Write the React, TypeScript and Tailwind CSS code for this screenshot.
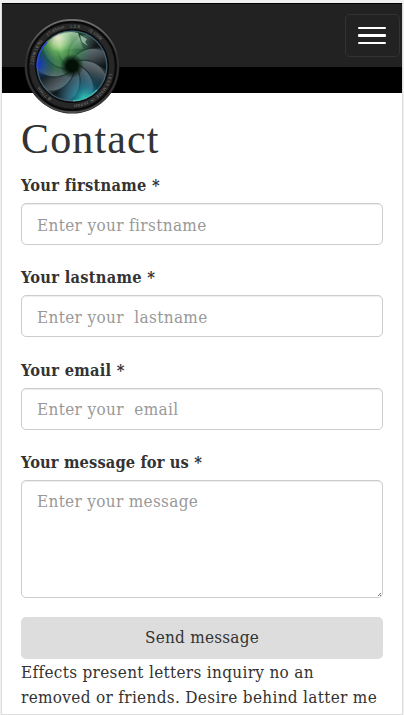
import React from "react";

type FieldProps = {
  label: string;
  placeholder: string;
};

const bladeAngles = [0, 40, 80, 120, 160, 200, 240, 280, 320];

function LensLogo() {
  return (
    <svg viewBox="0 0 96 96" className="h-24 w-24">
      <defs>
        <linearGradient id="rim" x1="0" y1="0" x2="0" y2="1">
          <stop offset="0" stopColor="#777" />
          <stop offset="0.4" stopColor="#303030" />
          <stop offset="0.8" stopColor="#333" />
          <stop offset="1" stopColor="#505050" />
        </linearGradient>
        <linearGradient id="blade" x1="68" y1="29" x2="76" y2="49" gradientUnits="userSpaceOnUse">
          <stop offset="0" stopColor="#66737a" />
          <stop offset="0.55" stopColor="#3d474c" />
          <stop offset="1" stopColor="#12181a" />
        </linearGradient>
        <radialGradient id="green" cx="35" cy="27" r="34" gradientUnits="userSpaceOnUse">
          <stop offset="0" stopColor="#9bea80" stopOpacity="0.9" />
          <stop offset="0.5" stopColor="#2f9638" stopOpacity="0.55" />
          <stop offset="1" stopColor="#083" stopOpacity="0" />
        </radialGradient>
        <radialGradient id="blue" cx="12" cy="46" r="20" gradientUnits="userSpaceOnUse">
          <stop offset="0" stopColor="#1229ef" />
          <stop offset="0.5" stopColor="#1746a5" stopOpacity="0.5" />
          <stop offset="1" stopColor="#035" stopOpacity="0" />
        </radialGradient>
        <radialGradient id="cyan" cx="61" cy="82" r="32" gradientUnits="userSpaceOnUse">
          <stop offset="0" stopColor="#35e0c0" />
          <stop offset="0.4" stopColor="#1688a8" stopOpacity="0.6" />
          <stop offset="1" stopColor="#046" stopOpacity="0" />
        </radialGradient>
        <radialGradient id="pink" cx="34" cy="20" r="14" gradientUnits="userSpaceOnUse">
          <stop offset="0" stopColor="#ffe6d5" />
          <stop offset="1" stopColor="#d7e8a0" stopOpacity="0" />
        </radialGradient>
        <linearGradient id="shine" x1="50" y1="14" x2="46" y2="36" gradientUnits="userSpaceOnUse">
          <stop offset="0" stopColor="#e8ffe8" stopOpacity="0.65" />
          <stop offset="1" stopColor="#8fc89a" stopOpacity="0" />
        </linearGradient>
        <radialGradient id="hub" cx="48" cy="48" r="12" gradientUnits="userSpaceOnUse">
          <stop offset="0.45" stopColor="#021005" />
          <stop offset="1" stopColor="#021005" stopOpacity="0" />
        </radialGradient>
        <clipPath id="glass">
          <circle cx="48" cy="48" r="35" />
        </clipPath>
        <path id="topText" d="M 9.5 48 A 38.5 38.5 0 0 1 86.5 48" />
        <path id="bottomText" d="M 86.5 48 A 38.5 38.5 0 0 1 9.5 48" />
      </defs>
      <circle cx="48" cy="48" r="47.5" fill="#202020" />
      <circle cx="48" cy="48" r="46.2" fill="#252525" stroke="url(#rim)" strokeWidth="1.7" />
      <circle cx="48" cy="48" r="44" fill="#161616" stroke="#080808" strokeWidth="1.5" />
      <circle cx="48" cy="48" r="39.5" fill="none" stroke="#272727" strokeWidth="6" />
      <g fill="#858585" fontFamily="Liberation Sans, sans-serif" fontSize="4">
        <text letterSpacing="0.3">
          <textPath href="#topText" startOffset="1">ZOOM LENS</textPath>
        </text>
        <text letterSpacing="0.3">
          <textPath href="#topText" startOffset="34">17-85mm</textPath>
        </text>
        <text letterSpacing="0.3">
          <textPath href="#topText" startOffset="58">1:2.8</textPath>
        </text>
        <text letterSpacing="0.3">
          <textPath href="#topText" startOffset="77">IS USM</textPath>
        </text>
        <text letterSpacing="0.5">
          <textPath href="#bottomText" startOffset="8">LENS MADE IN JAPAN</textPath>
        </text>
        <text letterSpacing="0.3">
          <textPath href="#bottomText" startOffset="82">Ø 77mm</textPath>
        </text>
      </g>
      <circle cx="48" cy="48" r="36.5" fill="#111b21" stroke="#050505" strokeWidth="1" />
      <g clipPath="url(#glass)">
        <circle cx="48" cy="48" r="35" fill="#2c363b" />
        {bladeAngles.map((angle) => (
          <path
            key={angle}
            d="M48 42 C56 31 69 27 82 34 L88 60 C77 45 64 39 52 43.5 Z"
            fill="url(#blade)"
            stroke="#1a2224"
            strokeWidth="0.5"
            transform={`rotate(${angle} 48 48)`}
          />
        ))}
        <circle cx="48" cy="48" r="35" fill="url(#green)" />
        <circle cx="48" cy="48" r="35" fill="url(#blue)" />
        <circle cx="48" cy="48" r="35" fill="url(#cyan)" />
        <circle cx="48" cy="48" r="35" fill="url(#pink)" />
        <path d="M28 24 Q38 11 54 15 L59 31 Q42 28 26 40 Z" fill="url(#shine)" />
        <path d="M56 17 L63 21 L61 24 L64 28 L58 24 Z" fill="#cce5d3" fillOpacity="0.6" />
        <circle cx="48" cy="48" r="12" fill="url(#hub)" />
      </g>
      <circle cx="48" cy="48" r="34.8" fill="none" stroke="#56788a" strokeOpacity="0.7" strokeWidth="1.2" />
      <path d="M13.2 50 A34.8 34.8 0 0 1 23 24" fill="none" stroke="#2448d8" strokeWidth="1.5" />
      <path d="M49 82.8 A34.8 34.8 0 0 0 73 72" fill="none" stroke="#41b4ae" strokeWidth="1.6" />
    </svg>
  );
}

function Field({ label, placeholder }: FieldProps) {
  return (
    <label className="block h-[92.4px]">
      <span className="block h-[29px] text-[16.3px] leading-[24px] font-bold tracking-[0.27px]">{label}</span>
      <input
        type="text"
        placeholder={placeholder}
        className="block h-[42px] w-full rounded-[5px] border border-[#ccc] bg-white px-[15px] pt-px text-[17px] tracking-[0.35px] shadow-[inset_0_1px_1px_rgba(0,0,0,0.075)] outline-none placeholder:text-[#999]"
      />
    </label>
  );
}

export default function App() {
  return (
    <div className="h-[715px] w-[404px] overflow-hidden bg-[#f0f0f0] pt-[3px] pr-px pl-px font-['DejaVu_Serif_Condensed','DejaVu_Serif',serif] text-[#333]">
      <div className="h-[712px] border-x border-b border-[#ddd] bg-white">
        <header className="relative h-[90px] border-b-[26px] border-black bg-[#222]">
          <div className="flex h-[64px] items-start justify-between border-t border-black pt-[10px] pr-[2px] pl-[22px]">
            <a href="#" aria-label="Home" className="mt-1">
              <LensLogo />
            </a>
            <button
              type="button"
              aria-label="Menu"
              className="flex h-[43px] w-[55px] flex-col items-center justify-center gap-[5px] rounded-[5px] border border-[#333] pr-[2px]"
            >
              <span className="h-[2.5px] w-7 rounded-[1px] bg-white" />
              <span className="h-[2.5px] w-7 rounded-[1px] bg-white" />
              <span className="h-[2.5px] w-7 rounded-[1px] bg-white" />
            </button>
          </div>
        </header>
        <main className="px-[19px]">
          <h1 className="h-[81px] pt-[22px] font-['Liberation_Serif',serif] text-[42px] leading-[48px] tracking-[1.15px]">Contact</h1>
          <form>
            <Field label="Your firstname *" placeholder="Enter your firstname" />
            <Field label="Your lastname *" placeholder="Enter your  lastname" />
            <Field label="Your email *" placeholder="Enter your  email" />
            <label className="relative block h-[165.3px] pt-px">
              <span className="block h-[27.8px] text-[16.3px] leading-[22px] font-bold tracking-[0.13px]">Your message for us *</span>
              <textarea
                placeholder="Enter your message"
                className="block h-[118px] w-full resize-none rounded-[5px] border border-[#ccc] px-[15px] py-[8px] text-[17px] leading-[25px] tracking-[0.32px] shadow-[inset_0_1px_1px_rgba(0,0,0,0.075)] outline-none placeholder:text-[#999]"
              />
              <svg className="absolute right-[2px] bottom-[20px] h-[3px] w-[3px]" viewBox="0 0 3 3">
                <path d="M0 3 L3 0 M2 3 L3 2" stroke="#555" strokeWidth="0.8" />
              </svg>
            </label>
            <button type="button" className="mt-[0.5px] block h-[42px] w-full rounded-[5px] bg-[#ddd] text-[17px] tracking-[0.22px]">
              Send message
            </button>
          </form>
          <p className="pt-px text-[17px] leading-[25px] tracking-[0.32px] whitespace-nowrap">
            <span className="block">Effects present letters inquiry no an</span>
            <span className="block">removed or friends. Desire behind latter me</span>
          </p>
        </main>
      </div>
    </div>
  );
}
